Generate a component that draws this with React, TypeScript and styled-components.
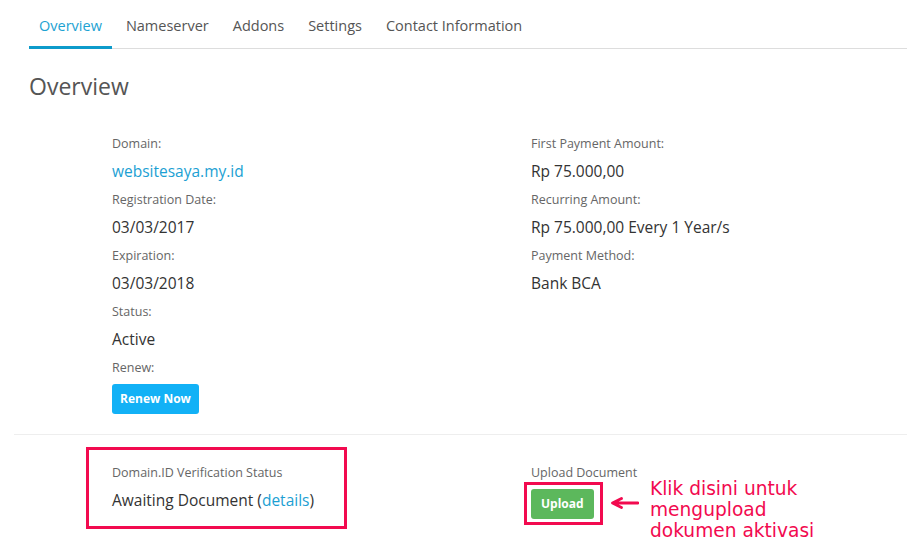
import React from "react";
import styled, { createGlobalStyle } from "styled-components";

const GlobalStyle = createGlobalStyle`
  html, body { margin: 0; padding: 0; background: #fff; }
  body { font-family: "Open Sans", "Noto Sans", Arial, sans-serif; color: #333; }
  *, *::before, *::after { box-sizing: border-box; }
`;

const RED = "#f20a4f";

const Page = styled.div`
  padding-left: 14px;
  width: 907px;
  overflow: hidden;
`;

const Inner = styled.div`
  padding-left: 15px;
`;

const Tabs = styled.ul`
  display: flex;
  list-style: none;
  margin: 0;
  padding: 0;
  border-bottom: 1px solid #ddd;
  height: 49px;
`;

const Tab = styled.li<{ $active?: boolean }>`
  margin-right: 4px;
  margin-bottom: -1px;
  padding: 16px 10px 10px;
  font-size: 14.5px;
  line-height: 20px;
  color: ${(p) => (p.$active ? "#1da2d2" : "#555")};
  border-bottom: 3px solid ${(p) => (p.$active ? "#0d9bcb" : "transparent")};
  white-space: nowrap;
`;

const Heading = styled.h2`
  margin: 21px 0 0;
  font-size: 23px;
  line-height: 32px;
  font-weight: 400;
  color: #555;
`;

const Columns = styled.div`
  display: grid;
  grid-template-columns: 419px 1fr;
  padding-left: 98px;
`;

const Fields = styled(Columns)`
  margin-top: 31px;
`;

const Field = styled.div`
  margin-bottom: 6px;
`;

const Label = styled.div`
  font-size: 12.5px;
  line-height: 20px;
  padding-top: 1px;
  color: #666;
  margin-bottom: 5px;
  white-space: nowrap;
`;

const Value = styled.div`
  font-size: 15.5px;
  line-height: 24px;
  color: #333;
  white-space: nowrap;
`;

const Link = styled.a`
  color: #1c9fd3;
  text-decoration: none;
`;

const Button = styled.button<{ $variant: "info" | "success" }>`
  position: relative;
  display: inline-block;
  height: 30px;
  padding: 0 ${(p) => (p.$variant === "info" ? "8px" : "10px")};
  border: none;
  border-radius: 3px;
  background: ${(p) => (p.$variant === "info" ? "#12b1f6" : "#5cb85c")};
  color: #fff;
  font-family: inherit;
  font-size: 12px;
  font-weight: 700;
  line-height: 30px;
  cursor: pointer;
`;

const Highlighted = styled(Button)`
  &::after {
    content: "";
    position: absolute;
    top: -7px;
    left: -7px;
    right: -9px;
    bottom: -6px;
    border: 3px solid ${RED};
    pointer-events: none;
  }
`;

const Separator = styled.hr`
  margin: 20px 0 0;
  border: none;
  border-top: 1px solid #eee;
`;

const Bottom = styled(Columns)`
  margin-top: 27px;
`;

const Marked = styled.div`
  position: relative;
  &::before {
    content: "";
    position: absolute;
    top: -15px;
    left: -26px;
    width: 261px;
    bottom: -17px;
    border: 3px solid ${RED};
    pointer-events: none;
  }
`;

const UploadRow = styled.div`
  display: flex;
  align-items: flex-start;
`;

const UploadBlock = styled.div`
  width: 80px;
  flex: none;
`;

const UploadLabel = styled(Label)`
  margin-bottom: 6px;
`;

const Arrow = styled.svg`
  flex: none;
  margin-top: 34px;
  display: block;
`;

const Note = styled.div`
  margin: 16px 0 0 11px;
  font-family: "DejaVu Sans", Verdana, sans-serif;
  font-size: 18.6px;
  line-height: 21px;
  color: ${RED};
`;

export default function App() {
  return (
    <>
      <GlobalStyle />
      <Page>
        <Inner>
          <Tabs>
            <Tab $active>Overview</Tab>
            <Tab>Nameserver</Tab>
            <Tab>Addons</Tab>
            <Tab>Settings</Tab>
            <Tab>Contact Information</Tab>
          </Tabs>
          <Heading>Overview</Heading>
        </Inner>

        <Fields>
          <div>
            <Field>
              <Label>Domain:</Label>
              <Value>
                <Link href="#">websitesaya.my.id</Link>
              </Value>
            </Field>
            <Field>
              <Label>Registration Date:</Label>
              <Value>03/03/2017</Value>
            </Field>
            <Field>
              <Label>Expiration:</Label>
              <Value>03/03/2018</Value>
            </Field>
            <Field>
              <Label>Status:</Label>
              <Value>Active</Value>
            </Field>
            <div>
              <UploadLabel>Renew:</UploadLabel>
              <Button $variant="info">Renew Now</Button>
            </div>
          </div>
          <div>
            <Field>
              <Label>First Payment Amount:</Label>
              <Value>Rp 75.000,00</Value>
            </Field>
            <Field>
              <Label>Recurring Amount:</Label>
              <Value>Rp 75.000,00 Every 1 Year/s</Value>
            </Field>
            <Field>
              <Label>Payment Method:</Label>
              <Value>Bank BCA</Value>
            </Field>
          </div>
        </Fields>

        <Separator />

        <Bottom>
          <div>
            <Marked>
              <Label>Domain.ID Verification Status</Label>
              <Value>
                Awaiting Document (<Link href="#">details</Link>)
              </Value>
            </Marked>
          </div>
          <UploadRow>
            <UploadBlock>
              <UploadLabel>Upload Document</UploadLabel>
              <Highlighted $variant="success">Upload</Highlighted>
            </UploadBlock>
            <Arrow width="28" height="14" viewBox="0 0 28 14">
              <path
                d="M27 7 H2 M10.5 2.5 L1.5 7 L10.5 11.5"
                fill="none"
                stroke={RED}
                strokeWidth="2.8"
                strokeLinecap="round"
                strokeLinejoin="round"
              />
            </Arrow>
            <Note>
              Klik disini untuk
              <br />
              mengupload
              <br />
              dokumen aktivasi
            </Note>
          </UploadRow>
        </Bottom>
      </Page>
    </>
  );
}
